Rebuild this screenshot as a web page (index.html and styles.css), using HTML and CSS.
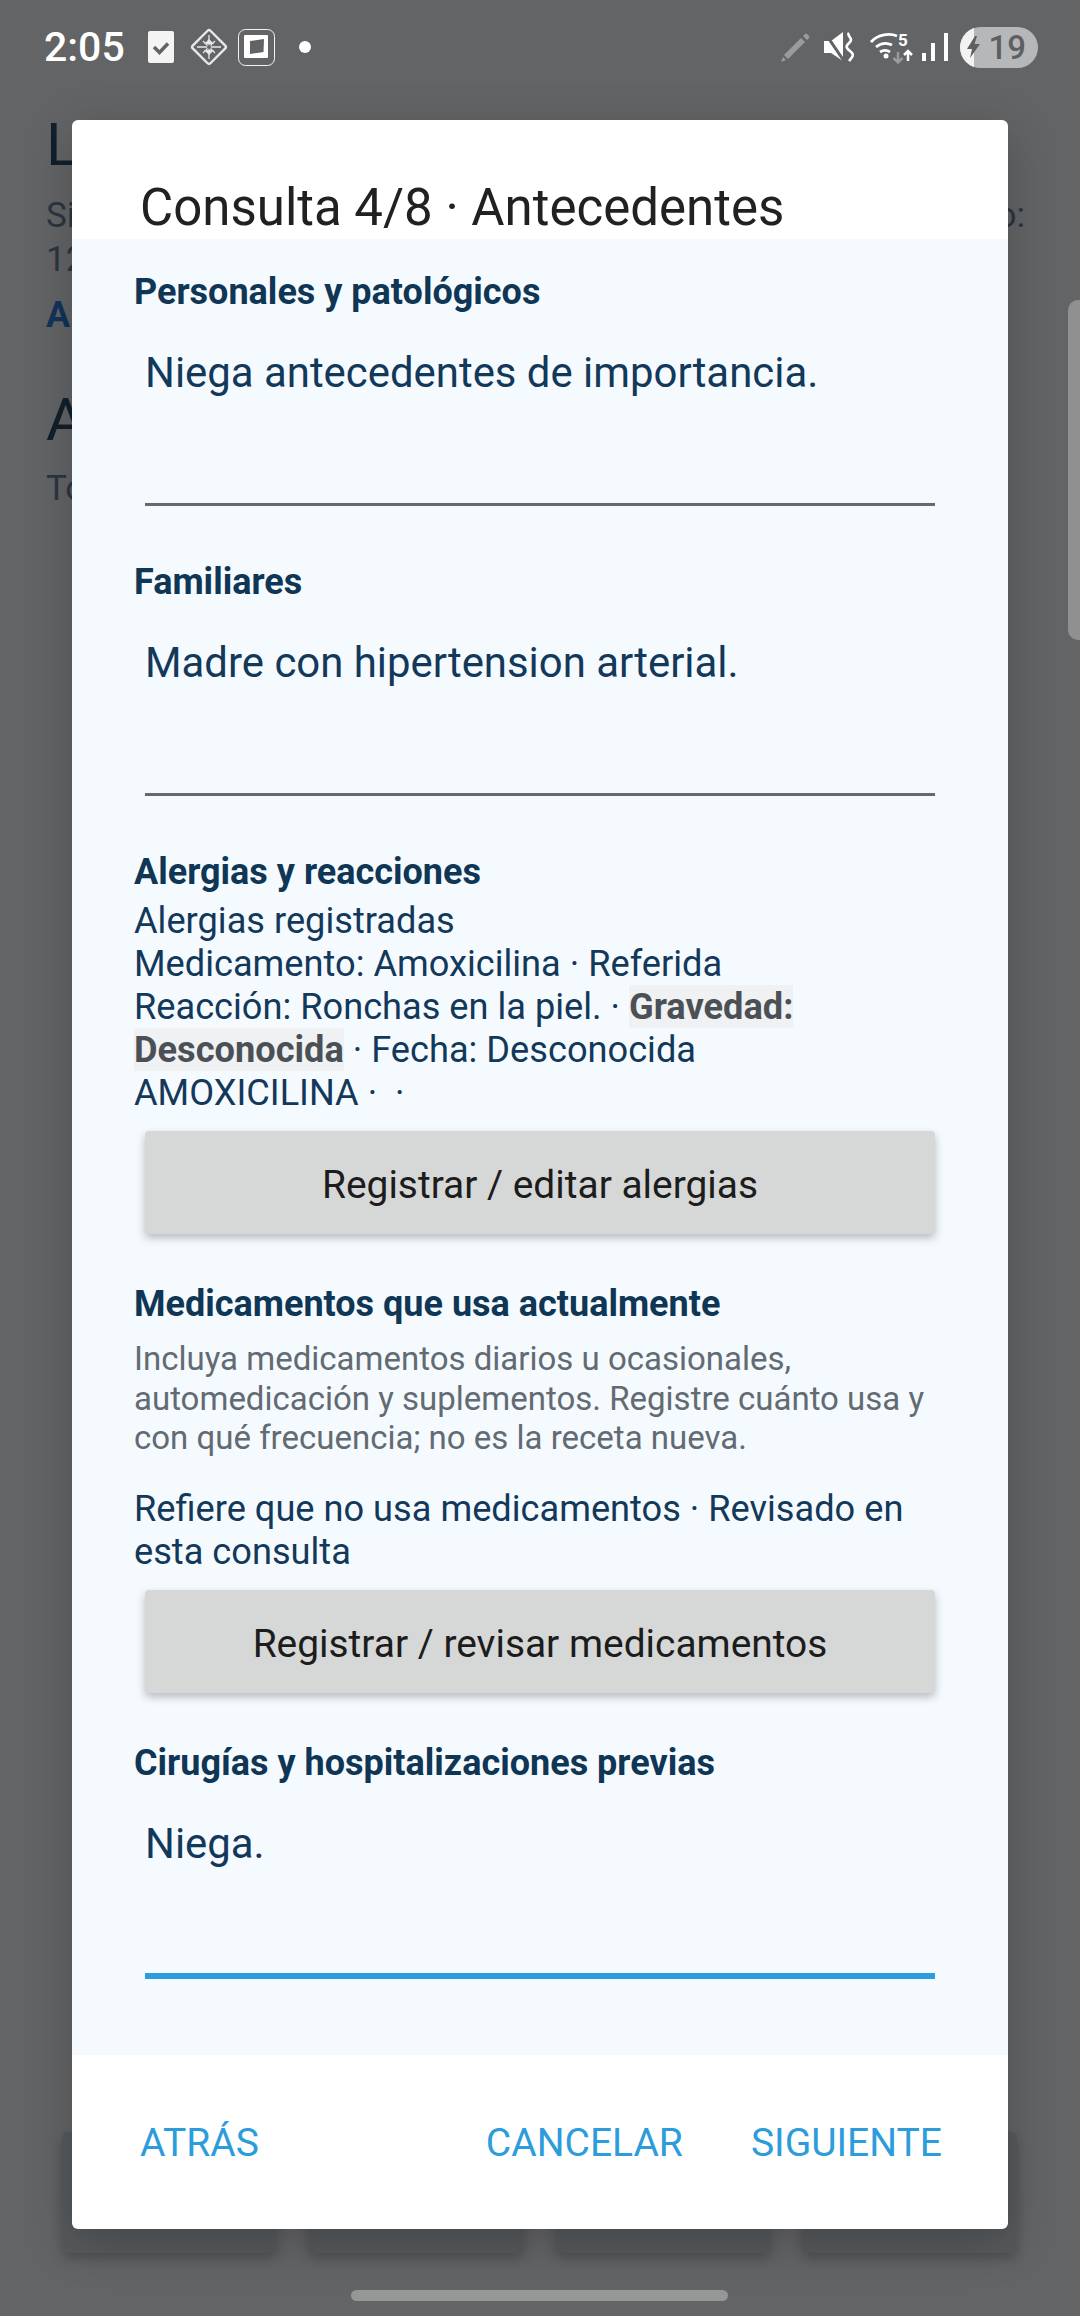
FILE: index.html
```html
<!DOCTYPE html>
<html lang="es">
<head>
    <meta charset="UTF-8">
    <meta name="viewport" content="width=device-width, initial-scale=1.0">
    <title>Consulta 4/8</title>
    <link rel="stylesheet" href="styles.css">
</head>
<body>
    <div class="status-bar">
        <div class="status-left">
            <span class="status-time">2:05</span>
            <svg class="icon-check" width="26" height="32" viewBox="0 0 26 32"><rect width="26" height="32" rx="2" fill="#f4f4f4"/><path d="M6 16l5.500 5.500L20 12.500" fill="none" stroke="#626365" stroke-width="3.500"/></svg>
            <svg class="icon-diamond" width="38" height="38" viewBox="0 0 38 38"><g fill="none" stroke="#e8e8e8"><rect x="6.500" y="6.500" width="25" height="25" rx="2" stroke-width="2.400" transform="rotate(45 19 19)"/><path d="M19 7v24M7 19h24M13 13l12 12M25 13L13 25" stroke-width="1.300"/></g><path d="M19 11l5 5h-10zM19 27l-5-5h10z" fill="#e8e8e8"/><circle cx="19" cy="19" r="2" fill="#626365"/></svg>
            <svg class="icon-square" width="37" height="37" viewBox="0 0 37 37"><rect x=".5" y=".5" width="36" height="36" rx="7" fill="none" stroke="#f4f4f4"/><rect x="6" y="6" width="24" height="23" rx="1" fill="#fff"/><path d="M12 12L26 10L25.500 23L12 25Z" fill="#626365"/></svg>
            <span class="status-dot"></span>
        </div>
        <div class="status-right">
            <svg class="icon-pencil" width="30" height="31" viewBox="0 0 30 31"><path d="M21 6l4 4L8 27l-4-4zM23 4l2-2q1-1 2 0l2 2q1 1 0 2l-2 2zM3 25l3 3-5 2z" fill="#9a9b9c"/></svg>
            <svg class="icon-mute" width="30" height="30" viewBox="0 0 30 30"><path d="M0 9h7L19 0v29L7 21H0z" fill="#fff"/><path d="M1 1l19 28" stroke="#626365" stroke-width="3"/><path d="M25 1c-3 3 5 5 1 9s-5 5 0 9 3 5-1 10" fill="none" stroke="#fff" stroke-width="2.600"/></svg>
            <svg class="icon-wifi" width="44" height="33" viewBox="0 0 44 33"><g fill="none" stroke="#fff" stroke-width="2.800"><path d="M1 11C8 3 20 2 27 5"/><path d="M6 16c5-4 10-5 16-2"/><path d="M10 21c3-2 7-2 10 0"/></g><circle cx="16" cy="25" r="2.500" fill="#fff"/><path d="M28 21v10M23.500 27l4.500 4.500 4.500-4.500" fill="none" stroke="#9a9b9c" stroke-width="2.500"/><path d="M38 30V20M34 24l4-4 4 4" fill="none" stroke="#fff" stroke-width="2.500"/><text x="28" y="15" class="wifi-five">5</text></svg>
            <svg class="icon-signal" width="26" height="30" viewBox="0 0 26 30"><path d="M0 21h4v8H0zM9 11h4v18H9zM22 1h4v28h-4z" fill="#fff"/></svg>
            <div class="battery"><span class="battery-charge"></span><svg class="battery-bolt" width="13" height="22" viewBox="0 0 13 22"><path d="M8 0L0 13h5l-2 9L13 8H7.500L10 0z" fill="#5e5f61"/></svg><span class="battery-level">19</span></div>
        </div>
    </div>

    <div class="backdrop-page">
        <div class="backdrop-title">L</div>
        <div class="backdrop-line first">Si<span class="backdrop-end">o:</span></div>
        <div class="backdrop-line">12</div>
        <div class="backdrop-link">A</div>
        <div class="backdrop-title second">A</div>
        <div class="backdrop-line last">To</div>
    </div>
    <div class="backdrop-scroll"></div>
    <div class="backdrop-cards">
        <div class="backdrop-card"></div>
        <div class="backdrop-card"></div>
        <div class="backdrop-card"></div>
        <div class="backdrop-card"></div>
    </div>
    <div class="home-pill"></div>

    <div class="dialog">
        <div class="dialog-header">Consulta 4/8 · Antecedentes</div>
        <div class="dialog-body">
            <div class="section-title">Personales y patológicos</div>
            <div class="field">Niega antecedentes de importancia.</div>

            <div class="section-title">Familiares</div>
            <div class="field">Madre con hipertension arterial.</div>

            <div class="section-title">Alergias y reacciones</div>
            <p class="record allergies">Alergias registradas<br>Medicamento: Amoxicilina · Referida<br>Reacción: Ronchas en la piel. · <b class="severity">Gravedad:</b> <b class="severity">Desconocida</b> · Fecha: Desconocida<br>AMOXICILINA · &nbsp;·</p>
            <button class="action-btn">Registrar / editar alergias</button>

            <div class="section-title after-btn">Medicamentos que usa actualmente</div>
            <p class="hint">Incluya medicamentos diarios u ocasionales, automedicación y suplementos. Registre cuánto usa y con qué frecuencia; no es la receta nueva.</p>
            <p class="record">Refiere que no usa medicamentos · Revisado en esta consulta</p>
            <button class="action-btn">Registrar / revisar medicamentos</button>

            <div class="section-title after-btn">Cirugías y hospitalizaciones previas</div>
            <div class="field focused">Niega.</div>
        </div>
        <div class="dialog-footer">
            <a href="#" class="dialog-btn">ATRÁS</a>
            <div class="footer-right">
                <a href="#" class="dialog-btn">CANCELAR</a>
                <a href="#" class="dialog-btn">SIGUIENTE</a>
            </div>
        </div>
    </div>
</body>
</html>
```

FILE: styles.css
```css
* {
    margin: 0;
    padding: 0;
    box-sizing: border-box;
}

body {
    width: 1080px;
    height: 2316px;
    position: relative;
    overflow: hidden;
    background-color: #636466;
    font-family: Roboto, sans-serif;
}

.status-bar {
    height: 94px;
    padding: 26px 42px 0 44px;
    display: flex;
    justify-content: space-between;
    align-items: flex-start;
}

.status-left {
    height: 42px;
    display: flex;
    align-items: center;
}

.status-time {
    width: 104px;
    color: #fff;
    font-size: 41px;
    font-weight: 500;
}

.icon-diamond {
    margin-left: 16px;
}

.icon-square {
    margin-left: 10px;
}

.status-dot {
    width: 12px;
    height: 12px;
    margin-left: 24px;
    border-radius: 50%;
    background-color: #fff;
}

.status-right {
    height: 42px;
    display: flex;
    align-items: center;
}

.icon-mute {
    margin-left: 14px;
}

.icon-wifi {
    margin-left: 16px;
}

.icon-signal {
    margin-left: 8px;
}

.wifi-five {
    fill: #fff;
    font-family: Roboto, sans-serif;
    font-size: 17px;
    font-weight: 700;
}

.battery {
    width: 78px;
    height: 41px;
    margin-left: 12px;
    position: relative;
    display: flex;
    align-items: center;
    justify-content: flex-end;
    gap: 8px;
    padding-right: 12px;
    border-radius: 21px;
    overflow: hidden;
    background-color: #b6b7b8;
}

.battery-charge {
    position: absolute;
    left: 0;
    top: 0;
    bottom: 0;
    width: 14px;
    background-color: #f2f2f2;
}

.battery-bolt {
    position: relative;
}

.battery-level {
    position: relative;
    color: #5e5f61;
    font-size: 33px;
    font-weight: 500;
}

.backdrop-page {
    padding: 15px 0 0 46px;
    color: #2c3640;
}

.backdrop-title {
    font-size: 60px;
    line-height: 72px;
    color: #11202c;
}

.backdrop-title.second {
    margin-top: 46px;
}

.backdrop-line {
    width: 979px;
    font-size: 35px;
    line-height: 44px;
    display: flex;
    justify-content: space-between;
}

.backdrop-line.first {
    margin-top: 13px;
}

.backdrop-line.last {
    margin-top: 11px;
}

.backdrop-link {
    margin-top: 10px;
    font-size: 36px;
    line-height: 46px;
    font-weight: 700;
    color: #12335a;
}

.backdrop-scroll {
    position: absolute;
    right: 0;
    top: 300px;
    width: 12px;
    height: 340px;
    border-radius: 10px 0 0 10px;
    background-color: #8f9090;
}

.backdrop-cards {
    position: absolute;
    left: 62px;
    top: 2132px;
    display: flex;
    gap: 33px;
}

.backdrop-card {
    width: 214px;
    height: 121px;
    border-radius: 6px;
    background-color: #565a5d;
    box-shadow: 0 6px 12px rgba(0, 0, 0, 0.2);
}

.home-pill {
    position: absolute;
    left: 351px;
    top: 2290px;
    width: 377px;
    height: 11px;
    border-radius: 6px;
    background-color: #959696;
}

.dialog {
    position: absolute;
    left: 72px;
    top: 120px;
    width: 936px;
    height: 2109px;
    display: flex;
    flex-direction: column;
    border-radius: 6px;
    overflow: hidden;
    background-color: #fff;
    box-shadow: 0 12px 48px rgba(0, 0, 0, 0.22);
}

.dialog-header {
    height: 119px;
    padding: 58px 0 0 68px;
    font-size: 51px;
    line-height: 60px;
    color: #212121;
    white-space: nowrap;
}

.dialog-body {
    height: 1816px;
    padding: 31px 62px 0 62px;
    background-color: #f5faff;
    color: #12385a;
}

.section-title {
    font-size: 36px;
    line-height: 44px;
    font-weight: 700;
    color: #0f3654;
}

.field {
    height: 180px;
    margin: 12px 11px 54px 11px;
    padding-top: 23px;
    font-size: 41.900px;
    line-height: 48px;
    border-bottom: 3px solid #666a6d;
}

.field.focused {
    height: 182px;
    border-bottom: 6px solid #2d9cdb;
}

.record {
    font-size: 36.200px;
    line-height: 43px;
    color: #12385a;
}

.record.allergies {
    margin-top: 5px;
}

.severity {
    color: #4a5056;
    background-color: #eff1f3;
}

.action-btn {
    display: block;
    width: 790px;
    height: 103px;
    margin: 17px 0 0 11px;
    padding-top: 4px;
    border: none;
    border-radius: 4px;
    font-family: Roboto, sans-serif;
    font-size: 38.900px;
    color: #1c1c1c;
    background-color: #d6d7d7;
    box-shadow: 0 4px 8px rgba(0, 0, 0, 0.25);
}

.section-title.after-btn {
    margin-top: 48px;
}

.hint {
    margin: 13px 0 29px;
    font-size: 33px;
    line-height: 39.500px;
    color: #636b72;
}

.dialog-footer {
    flex: 1;
    padding: 2px 66px 0 68px;
    display: flex;
    justify-content: space-between;
    align-items: center;
}

.footer-right {
    display: flex;
    gap: 68px;
}

.dialog-btn {
    font-size: 39px;
    color: #2d9cdb;
    text-decoration: none;
}
```
